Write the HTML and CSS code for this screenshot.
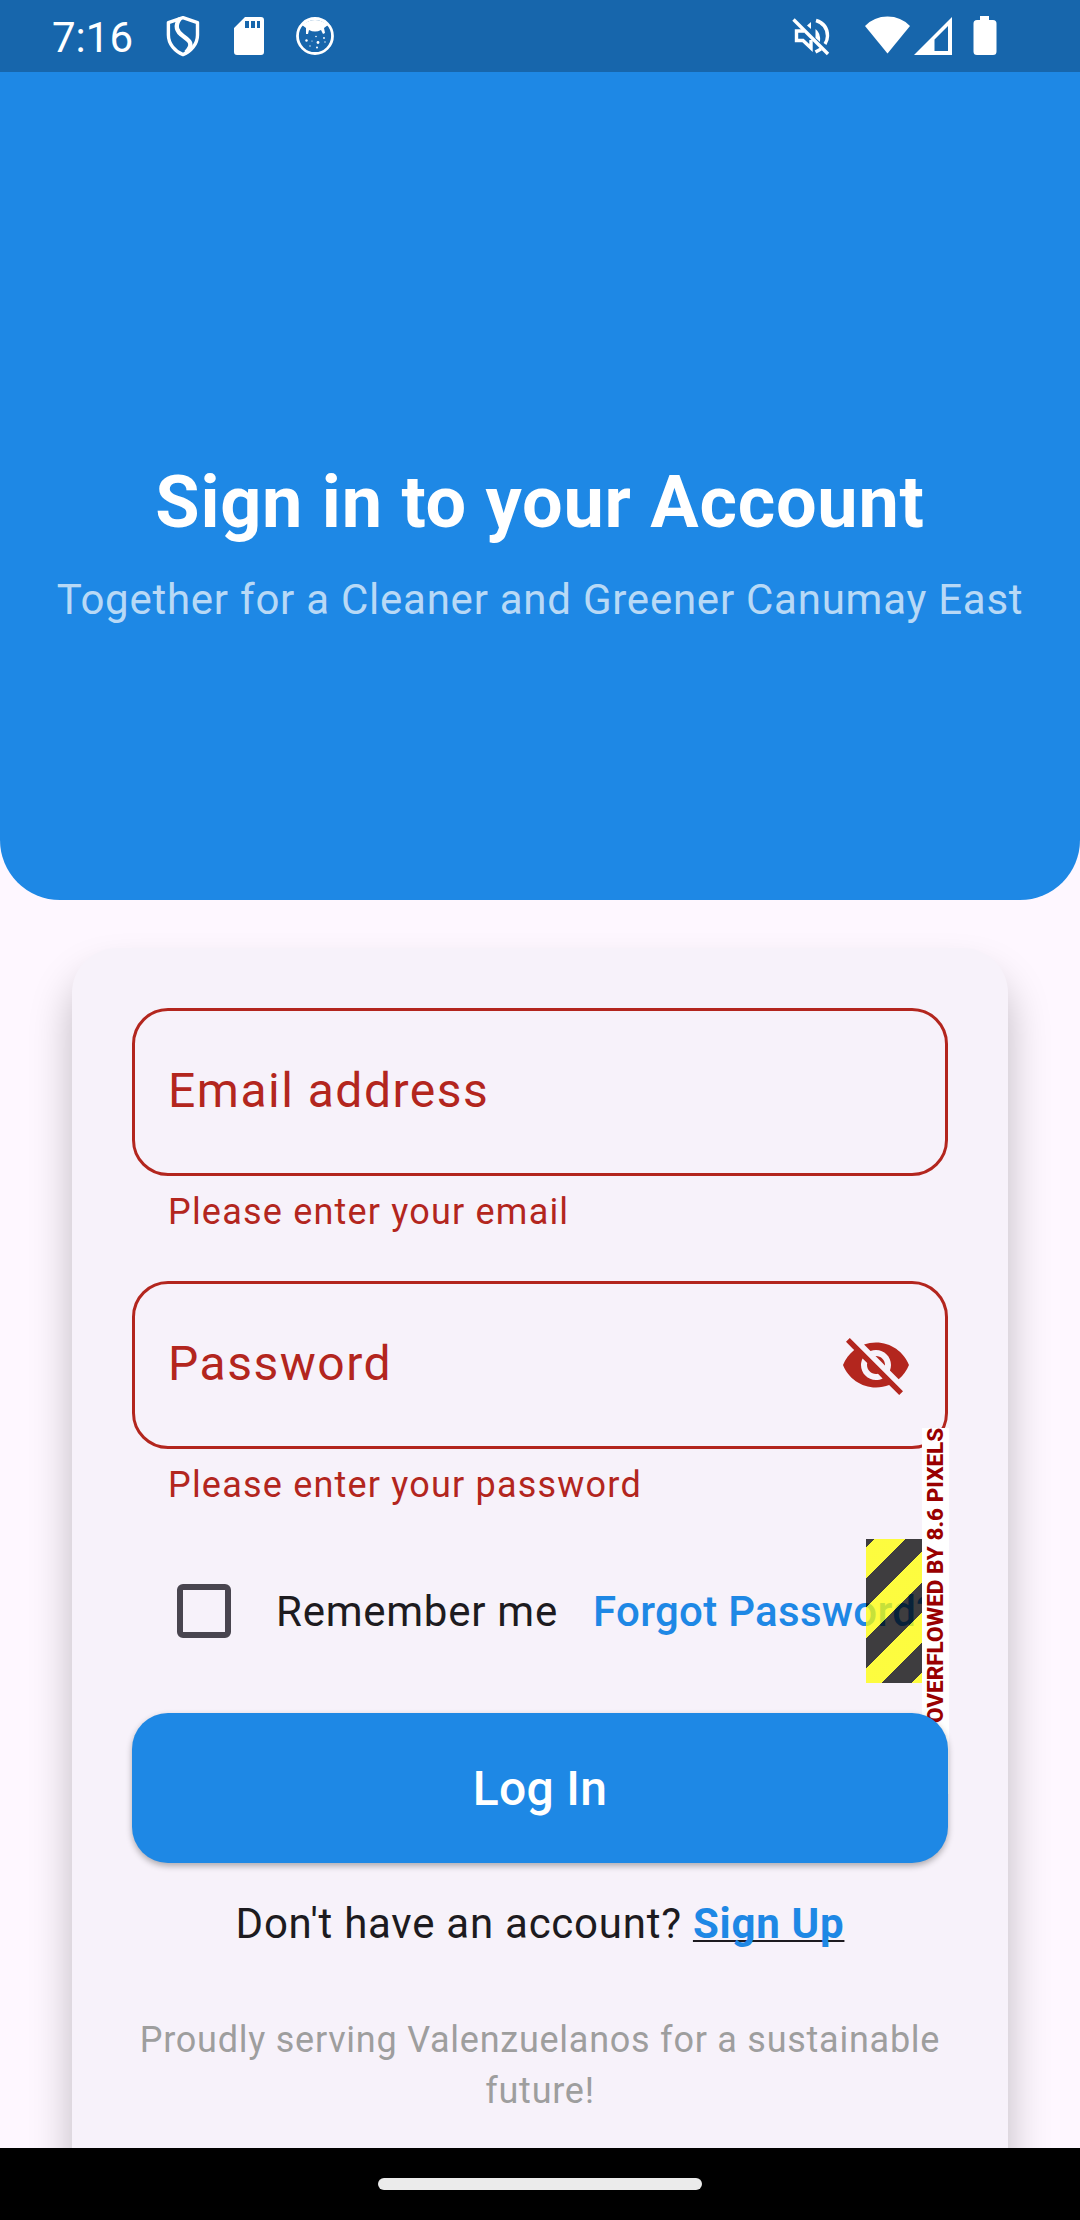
FILE: index.html
```
<!DOCTYPE html>
<html lang="en">
<head>
<meta charset="utf-8">
<title>Sign in</title>
<link rel="stylesheet" href="styles.css">
</head>
<body>
<div class="screen">
  <header class="hero">
    <div class="statusbar">
      <span class="clock">7:16</span>
      <svg class="ic-shield" width="36" height="42" viewBox="0 0 36 42" fill="none" stroke="#fff" stroke-width="3.4" stroke-linejoin="round"><path d="M17 2.600 31.500 7.600V20C31.500 29 25 36.500 17 39.600 9 36.500 2.400 29 2.400 20V7.600Z"/><path d="M14 3.500C8 11 11 17 17 21 24 26 28 29 20 37.500" stroke-width="4.400"/></svg>
      <svg class="ic-sd" width="30" height="38" viewBox="0 0 30 38"><path fill="#fff" fill-rule="evenodd" d="M11 0H27Q30 0 30 3V35Q30 38 27 38H3Q0 38 0 35V11ZM11 4V11H15V4ZM17 4V11H21V4ZM23 4V11H26V4Z"/></svg>
      <svg class="ic-cat" width="38" height="38" viewBox="0 0 38 38"><circle cx="19" cy="19" r="17.500" fill="none" stroke="#fff" stroke-width="2.800"/><path fill="#fff" d="M6 8Q19-2 32 8L28 11 29 16 27 17 25 13Q19 16 13 13L12 17 10 17 10 11Z"/><g fill="#fff"><circle cx="10.500" cy="23.500" r="1.200"/><circle cx="22" cy="25.500" r="1.400"/><circle cx="20" cy="19.500" r=".8"/><circle cx="28" cy="21" r=".9"/><circle cx="14" cy="29" r=".7"/><circle cx="29" cy="25" r=".7"/><circle cx="21" cy="30.500" r="1"/><circle cx="16" cy="24" r=".6"/></g></svg>
      <svg class="ic-mute" width="38" height="38" viewBox="0 0 38 38" fill="none" stroke="#fff" stroke-width="3.400"><path d="M1.500 1.500 36 36"/><path d="M12 13H4.500V22.500H11L19 30V22"/><path d="M15 7.500 19 4V11Z" fill="#fff" stroke="none"/><path d="M23.500 11V20L28 24Q29 15 23.500 11Z" fill="#fff" stroke="none"/><path d="M24 2.500Q35.500 6 35.500 18 35.500 22 33 26"/><path d="M23.500 34 29 31"/></svg>
      <svg class="ic-wifi" width="46" height="38" viewBox="0 0 46 38"><path fill="#fff" d="M0 10Q9 .5 22.500 .5T45 10L22.500 37.500Z"/></svg>
      <svg class="ic-signal" width="38" height="38" viewBox="0 0 38 38"><path fill="#fff" fill-rule="evenodd" d="M38 0V38H0ZM20.500 22.500V34H34V9Z"/></svg>
      <svg class="ic-battery" width="24" height="39" viewBox="0 0 24 39"><path fill="#fff" d="M7 0H16V4H20Q23.500 4 23.500 7.500V35.500Q23.500 39 20 39H4Q.5 39 .5 35.500V7.500Q.5 4 4 4H7Z"/></svg>
    </div>
    <h1 class="title">Sign in to your Account</h1>
    <p class="subtitle">Together for a Cleaner and Greener Canumay East</p>
  </header>
  <main class="card">
    <div class="field"><span class="label">Email address</span></div>
    <p class="error">Please enter your email</p>
    <div class="field">
      <span class="label">Password</span>
      <svg class="eye" width="72" height="72" viewBox="0 0 24 24"><path fill="#b3261e" d="M12 7c2.760 0 5 2.240 5 5 0 .65-.13 1.260-.36 1.830l2.920 2.920c1.510-1.260 2.700-2.890 3.430-4.750-1.730-4.390-6-7.500-11-7.500-1.400 0-2.740.25-3.980.7l2.160 2.160C10.740 7.130 11.350 7 12 7zM2 4.270l2.280 2.280.46.46C3.080 8.300 1.780 10.020 1 12c1.730 4.390 6 7.500 11 7.500 1.550 0 3.030-.3 4.380-.84l.42.42L19.730 22 21 20.730 3.270 3 2 4.270zM7.530 9.800l1.550 1.550c-.05.21-.08.43-.08.65 0 1.660 1.340 3 3 3 .22 0 .44-.03.65-.08l1.550 1.550c-.67.33-1.410.53-2.200.53-2.760 0-5-2.240-5-5 0-.79.2-1.530.53-2.200zm4.310-.78l3.150 3.150.02-.16c0-1.660-1.340-3-3-3l-.17.010z"/></svg>
    </div>
    <p class="error error-last">Please enter your password</p>
    <div class="options">
      <span class="checkbox"></span>
      <span class="remember">Remember me</span>
      <a class="forgot">Forgot Password?</a>
      <span class="hazard"></span>
      <span class="overflow-note">OVERFLOWED BY 8.6 PIXELS</span>
    </div>
    <button class="login">Log In</button>
    <p class="signup">Don't have an account? <a class="signup-link">Sign Up</a></p>
    <p class="tagline">Proudly serving Valenzuelanos for a sustainable future!</p>
  </main>
  <nav class="navbar"><span class="handle"></span></nav>
</div>
</body>
</html>
```
FILE: styles.css
```
* { box-sizing: border-box; margin: 0; padding: 0; }
body { font-family: Roboto, sans-serif; background: #fef7ff; }
.screen { display: flex; flex-direction: column; width: 1080px; height: 2220px; overflow: hidden; background: #fef7ff; color: #1d1b20; }

.hero { flex: none; height: 900px; background: #1e88e5; border-radius: 0 0 60px 60px; color: #fff; text-align: center; }
.statusbar { display: flex; align-items: flex-start; height: 72px; padding-left: 52px; background: #1766ac; }
.statusbar svg { flex: none; }
.clock { width: 114px; margin-top: 13px; font-size: 42px; line-height: 50px; text-align: left; white-space: nowrap; }
.ic-shield { margin-top: 15px; }
.ic-sd { margin: 17px 0 0 32px; }
.ic-cat { margin: 17px 0 0 32px; }
.ic-mute { margin: 18px 0 0 458px; }
.ic-wifi { margin: 16px 0 0 35px; }
.ic-signal { margin: 17px 0 0 3px; }
.ic-battery { margin: 16px 0 0 21px; }
.title { margin-top: 380px; font-size: 72px; line-height: 102px; font-weight: 700; letter-spacing: .75px; white-space: nowrap; }
.subtitle { margin-top: 16px; font-size: 42px; line-height: 60px; letter-spacing: .75px; color: rgba(255, 255, 255, .7); white-space: nowrap; }

.card { flex: none; width: 936px; height: 1260px; margin: 48px 72px 0; padding: 60px; border-radius: 45px; background: #f7f2fa; box-shadow: 0 28px 42px rgba(0, 0, 0, .25); }
.field { display: flex; align-items: center; justify-content: space-between; height: 168px; padding: 0 33px; border: 3px solid #b3261e; border-radius: 36px; }
.label { padding-bottom: 4px; font-size: 48px; letter-spacing: 1.5px; color: #b3261e; white-space: nowrap; }
.eye { flex: none; }
.error { height: 105px; padding: 12px 36px 0; font-size: 36px; line-height: 48px; letter-spacing: 1.2px; color: #b3261e; }
.error-last { height: 90px; }
.options { position: relative; display: flex; align-items: center; height: 144px; padding-left: 45px; font-size: 42px; white-space: nowrap; }
.checkbox { flex: none; width: 54px; height: 54px; border: 6px solid #49454f; border-radius: 6px; }
.remember { width: 317px; margin-left: 45px; letter-spacing: .75px; }
.forgot { color: #1e88e5; font-weight: 500; letter-spacing: .3px; }
.hazard { position: absolute; top: 0; right: 0; width: 82px; height: 144px; background: repeating-linear-gradient(135deg, rgba(0, 0, 0, .75) 0 6.36px, rgba(255, 255, 0, .75) 6.36px 27.58px, rgba(0, 0, 0, .75) 27.58px 42.43px); }
.overflow-note { position: absolute; top: -111px; right: -1px; width: 27px; height: 366px; padding-top: 71px; background: #fff; color: #900; font-size: 22.500px; line-height: 27px; font-weight: 800; writing-mode: vertical-rl; transform: rotate(180deg); }
.login { position: relative; display: block; width: 816px; height: 150px; margin-top: 30px; padding-top: 2px; border: 0; border-radius: 36px; background: #1e88e5; color: #fff; font: 500 48px/56px Roboto, sans-serif; letter-spacing: .3px; box-shadow: 0 3px 6px rgba(0, 0, 0, .3); }
.signup { margin-top: 31px; font-size: 42px; line-height: 60px; letter-spacing: .75px; text-align: center; white-space: nowrap; }
.signup-link { color: #1e88e5; font-weight: 700; text-decoration: underline; text-decoration-color: #1d1b20; text-decoration-thickness: 2px; text-decoration-skip-ink: none; text-underline-offset: 2px; }
.tagline { margin-top: 61px; font-size: 36px; line-height: 51px; letter-spacing: .75px; text-align: center; color: #9e9e9e; }

.navbar { position: absolute; top: 2148px; left: 0; display: flex; align-items: center; justify-content: center; width: 1080px; height: 72px; background: #000; }
.handle { width: 324px; height: 12px; border-radius: 6px; background: #ebebeb; }
```
